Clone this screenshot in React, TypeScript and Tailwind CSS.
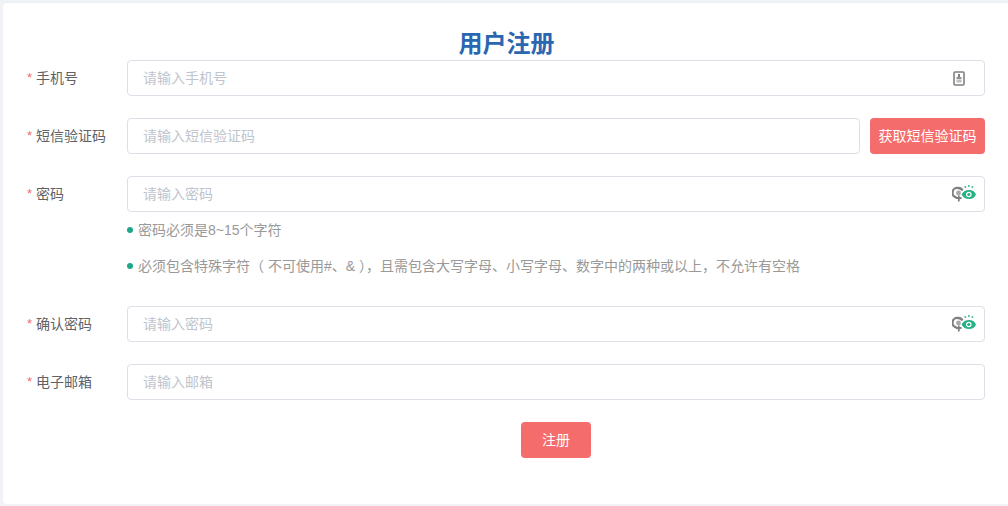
import { ReactNode } from 'react';

const cjk = '[font-family:"Liberation_Sans","Noto_Sans_CJK_SC",sans-serif]';

function PhoneIcon() {
  return (
    <svg width="12" height="15" viewBox="0 0 12 15" fill="none" className="mr-[5px]">
      <rect x="1" y="1" width="10" height="13" rx="1" stroke="#808080" strokeWidth="1.6" />
      <rect x="5" y="3" width="2" height="3" fill="#808080" />
      <rect x="3.5" y="6" width="5" height="2" fill="#909090" />
      <rect x="3.5" y="8.5" width="5" height="3" fill="#bdbdbd" />
    </svg>
  );
}

function EyeIcon() {
  return (
    <svg width="24" height="18" viewBox="0 0 24 18" fill="none" className="-mr-[6px]">
      <path d="M4.5 12.5A4.8 4.8 0 0 1 6 3A4.8 4.8 0 0 1 10.5 5.5" stroke="#808080" strokeWidth="2.4" />
      <circle cx="6.5" cy="8" r="2.4" fill="#a8a8a8" />
      <path d="M4 13H9.5M6.8 10.5V16.5" stroke="#808080" strokeWidth="1.8" />
      <path d="M9.5 9.5C11.2 6.4 13.6 5 17 5C20.4 5 22.6 6.4 24 9.5C22.6 12.6 20.4 14 17 14C13.6 14 11.2 12.6 9.5 9.5Z" fill="#25b385" />
      <circle cx="16.8" cy="9.5" r="2.8" fill="#fff" />
      <circle cx="16.8" cy="9.5" r="1.6" fill="#25b385" />
      <rect x="12.5" y="1.2" width="1.6" height="1.6" fill="#25b385" />
      <rect x="16" y="0.2" width="1.6" height="1.6" fill="#25b385" />
      <rect x="19.6" y="1.2" width="1.6" height="1.6" fill="#25b385" />
    </svg>
  );
}

function Field({ placeholder, icon }: { placeholder: string; icon?: ReactNode }) {
  return (
    <div className="flex-1 h-9 flex items-center justify-between pl-[15px] pr-[14px] border border-[#dcdfe6] rounded-[4px] bg-white">
      <span className="text-[14px] text-[#c0c4cc]">{placeholder}</span>
      {icon}
    </div>
  );
}

function Row({ label, children }: { label: string; children: ReactNode }) {
  return (
    <div className="flex items-start">
      <div className="w-[100px] h-9 flex items-center text-[14px] text-[#606266]">
        <span className="text-[#f56c6c] mr-[4px] text-[13px]">*</span>
        {label}
      </div>
      <div className="flex-1 flex gap-[10px]">{children}</div>
    </div>
  );
}

function Hint({ children }: { children: ReactNode }) {
  return (
    <div className="flex items-center h-9 text-[14px] text-[#999]">
      <span className="w-[6px] h-[6px] rounded-full bg-[#1fa78a] mr-[5px]" />
      {children}
    </div>
  );
}

export default function App() {
  return (
    <div className={`h-[506px] w-[1008px] overflow-hidden bg-[#f0f2f5] pl-[3px] pt-[2px] pb-[2px] ${cjk}`}>
      <div className="h-full bg-white rounded-tl-[4px] rounded-bl-[4px] pl-6 pr-[23px] pt-6 border-t border-[#e8f0fa]">
        <h1 className="text-center text-[24px] leading-[33px] font-bold text-[#2a67b1] pl-[1px]">用户注册</h1>
        <div className="flex flex-col gap-[22px]">
          <Row label="手机号">
            <Field placeholder="请输入手机号" icon={<PhoneIcon />} />
          </Row>
          <Row label="短信验证码">
            <Field placeholder="请输入短信验证码" />
            <button className="w-[115px] h-9 rounded-[4px] bg-[#f56c6c] text-white text-[14px]">获取短信验证码</button>
          </Row>
          <div>
            <Row label="密码">
              <Field placeholder="请输入密码" icon={<EyeIcon />} />
            </Row>
            <div className="pl-[100px]">
              <Hint>密码必须是8~15个字符</Hint>
              <Hint>必须包含特殊字符（ 不可使用#、&amp; ），且需包含大写字母、小写字母、数字中的两种或以上，不允许有空格</Hint>
            </div>
          </div>
          <Row label="确认密码">
            <Field placeholder="请输入密码" icon={<EyeIcon />} />
          </Row>
          <Row label="电子邮箱">
            <Field placeholder="请输入邮箱" />
          </Row>
          <div className="flex justify-center pl-[100px]">
            <button className="w-[70px] h-9 rounded-[4px] bg-[#f56c6c] text-white text-[14px]">注册</button>
          </div>
        </div>
      </div>
    </div>
  );
}
